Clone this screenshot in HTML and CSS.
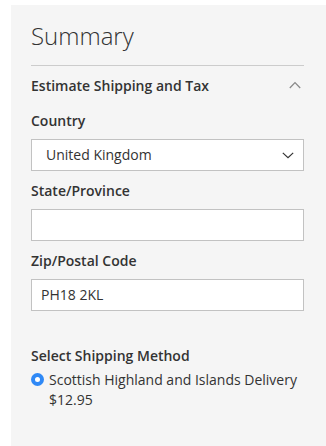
FILE: index.html
```html
<!DOCTYPE html>
<html lang="en">
<head>
<meta charset="utf-8">
<title>Summary</title>
<link rel="stylesheet" href="styles.css">
</head>
<body>
<div class="summary">
  <h2 class="summary-title">Summary</h2>
  <div class="block">
    <div class="block-head">
      <span class="block-title">Estimate Shipping and Tax</span>
      <svg class="caret-up" width="12" height="8" viewBox="0 0 12 8"><path d="M0.8 7 L6 1.6 L11.2 7" fill="none" stroke="#8a8a8a" stroke-width="1.3"/></svg>
    </div>
    <div class="fields">
      <div class="field">
        <label class="label">Country</label>
        <div class="control select">
          <span class="select-text">United Kingdom</span>
          <svg class="chevron" width="12" height="7" viewBox="0 0 12 7"><path d="M0.8 0.9 L6 5.8 L11.2 0.9" fill="none" stroke="#333" stroke-width="1.2"/></svg>
        </div>
      </div>
      <div class="field">
        <label class="label">State/Province</label>
        <div class="control input"></div>
      </div>
      <div class="field">
        <label class="label">Zip/Postal Code</label>
        <div class="control input"><span class="input-text">PH18 2KL</span></div>
      </div>
    </div>
    <div class="method">
      <div class="method-title">Select Shipping Method</div>
      <div class="option">
        <span class="radio"><span class="radio-dot"></span></span>
        <div class="option-text">Scottish Highland and Islands Delivery<br>$12.95</div>
      </div>
    </div>
  </div>
</div>
</body>
</html>
```
FILE: styles.css
```css
html, body {
  margin: 0;
  padding: 0;
  background: #ffffff;
}
body {
  font-family: "Open Sans", "Liberation Sans", sans-serif;
  color: #333333;
  font-size: 14px;
  line-height: 20px;
  overflow: hidden;
}
.summary {
  margin: 5px 0 0 11px;
  padding: 13px 22px 0 20px;
  background: #f5f5f5;
  height: 441px;
  box-sizing: border-box;
}
.summary-title {
  margin: 0;
  font-size: 24px;
  font-weight: 300;
  line-height: 36px;
  color: #333333;
}
.block {
  margin-top: 11px;
  border-top: 1px solid #cccccc;
}
.block-head {
  display: flex;
  justify-content: space-between;
  align-items: center;
  margin-top: 10px;
  height: 20px;
}
.block-title {
  font-weight: 600;
}
.caret-up {
  margin-right: 3px;
  margin-top: -2px;
}
.fields {
  display: flex;
  flex-direction: column;
  gap: 10px;
  margin-top: 15px;
}
.field {
  display: flex;
  flex-direction: column;
}
.label {
  font-weight: 600;
  margin-bottom: 8px;
}
.control {
  height: 32px;
  box-sizing: border-box;
  border: 1px solid #c2c2c2;
  background: #ffffff;
  display: flex;
  align-items: center;
}
.select {
  justify-content: space-between;
  padding: 0 9px 0 14px;
}
.chevron {
  margin-top: 1px;
}
.input {
  padding: 0 9px;
}
.method {
  margin-top: 35px;
}
.method-title {
  font-weight: 600;
}
.option {
  display: flex;
  margin-top: 4px;
}
.radio {
  width: 13px;
  height: 13px;
  border-radius: 50%;
  background: #2f89f6;
  display: flex;
  align-items: center;
  justify-content: center;
  margin: 3px 5px 0 0;
  flex-shrink: 0;
}
.radio-dot {
  width: 5px;
  height: 5px;
  border-radius: 50%;
  background: #ffffff;
}
```
